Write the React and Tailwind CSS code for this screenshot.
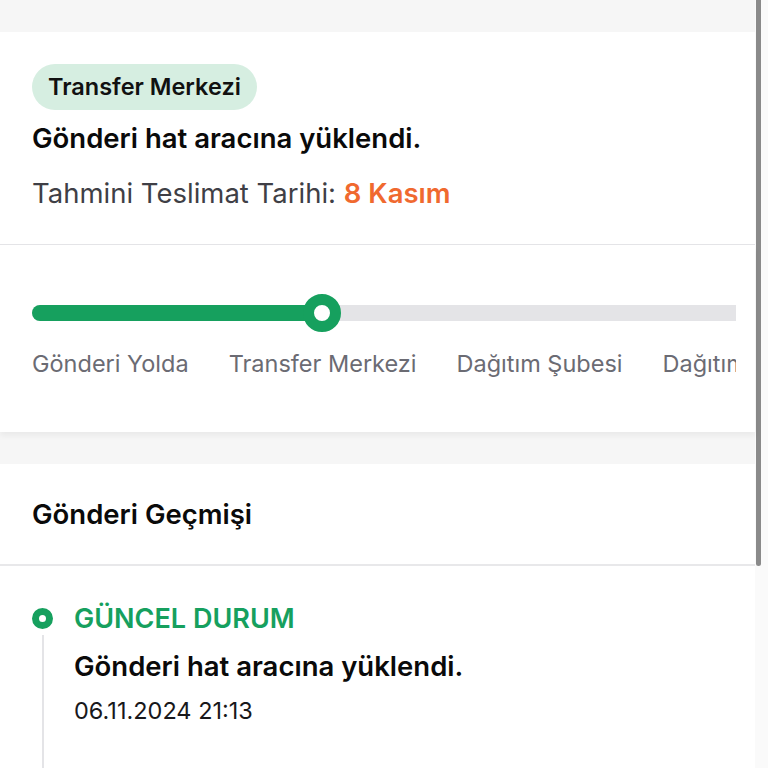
import React from 'react';

const steps = ['Gönderi Yolda', 'Transfer Merkezi', 'Dağıtım Şubesi', 'Dağıtımda'];

const App = () => {
    return (
        <div className="flex w-[768px] h-[768px] overflow-hidden bg-[#fafafa]" style={{ fontFamily: 'Inter, "Noto Sans", sans-serif' }}>
            <div className="flex flex-col w-[755px] shrink-0">
                {/* üst boşluk */}
                <div className="h-[32px] bg-[#f6f6f6]" />

                {/* durum kartı */}
                <div className="bg-white px-[32px] pt-[32px] h-[213px] border-b border-[#e4e4e7]">
                    <span className="inline-flex items-center h-[46px] px-[16px] rounded-full bg-[#d6eee1] text-[23.5px] font-semibold text-[#111]">
                        Transfer Merkezi
                    </span>
                    <p className="mt-[11px] text-[27.5px] font-semibold text-[#0a0a0a] leading-[34px]">
                        Gönderi hat aracına yüklendi.
                    </p>
                    <p className="mt-[21px] text-[27.5px] text-[#3f3f46] leading-[34px]">
                        Tahmini Teslimat Tarihi: <span className="text-[#f0692f] font-semibold">8 Kasım</span>
                    </p>
                </div>

                {/* ilerleme */}
                <div className="bg-white h-[187px] pl-[32px] pr-[19px] pt-[49px] shadow-[0_4px_6px_rgba(0,0,0,0.05)] relative z-10">
                    <div className="relative h-[38px] flex items-center">
                        <div className="w-full h-[16px] rounded-l-full bg-[#e4e4e7]">
                            <div className="h-[16px] w-[290px] rounded-full bg-[#16a05e]" />
                        </div>
                        <div className="absolute left-[271px] top-0 w-[38px] h-[38px] rounded-full border-[11px] border-[#16a05e] bg-white" />
                    </div>
                    <div className="flex gap-[40px] mt-[17px] overflow-hidden whitespace-nowrap text-[23.5px] leading-[30px] text-[#6b6b73]">
                        {steps.map((s) => (
                            <span key={s}>{s}</span>
                        ))}
                    </div>
                </div>

                <div className="h-[32px] bg-[#f6f6f6]" />

                {/* geçmiş başlık */}
                <div className="bg-white h-[102px] px-[32px] flex items-center border-b-2 border-[#e8e8ea]">
                    <h2 className="text-[27.5px] font-semibold text-[#0a0a0a] leading-[34px]">Gönderi Geçmişi</h2>
                </div>

                {/* zaman çizelgesi */}
                <div className="bg-white flex-1 pl-[32px] pt-[36px] flex gap-[21px]">
                    <div className="flex flex-col items-center w-[21px] pt-[6px]">
                        <div className="w-[21px] h-[21px] rounded-full border-[7px] border-[#16a05e] bg-white" />
                        <div className="w-[2px] flex-1 bg-[#e4e4e7] mt-[6px]" />
                    </div>
                    <div>
                        <p className="text-[27px] font-semibold text-[#16a05e] leading-[34px]">GÜNCEL DURUM</p>
                        <p className="mt-[13px] text-[27.5px] font-semibold text-[#0a0a0a] leading-[34px]">Gönderi hat aracına yüklendi.</p>
                        <p className="mt-[13px] text-[23.5px] text-[#18181b] leading-[30px]">06.11.2024 21:13</p>
                    </div>
                </div>
            </div>

            {/* kaydırma çubuğu */}
            <div className="w-[13px] shrink-0 flex">
                <div className="ml-[1px] w-[5px] h-[566px] bg-[#8a8a8a] rounded-b-full" />
            </div>
        </div>
    );
};

export default App;
